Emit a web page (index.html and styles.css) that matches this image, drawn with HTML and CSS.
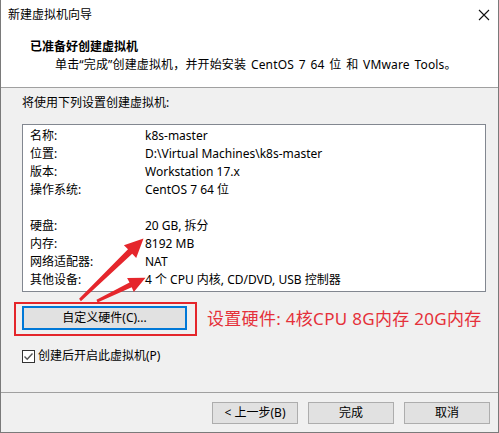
FILE: index.html
```html
<!DOCTYPE html>
<html lang="zh-CN">
<head>
<meta charset="utf-8">
<link rel="stylesheet" href="styles.css">
</head>
<body>
<div class="window">
  <div class="header">
    <div class="titlebar">
      <span class="title">新建虚拟机向导</span>
      <svg class="close" width="12" height="12" viewBox="0 0 12 12"><path d="M1 1 L11 11 M11 1 L1 11" stroke="#111" stroke-width="1.1" fill="none"/></svg>
    </div>
    <div class="head-title">已准备好创建虚拟机</div>
    <div class="head-sub">单击“完成”创建虚拟机，并开始安装 CentOS 7 64 位 和 VMware Tools。</div>
  </div>
  <div class="body">
    <div class="intro">将使用下列设置创建虚拟机:</div>
    <div class="listbox">
      <div class="row"><span class="k">名称:</span><span class="v">k8s-master</span></div>
      <div class="row"><span class="k">位置:</span><span class="v">D:\Virtual Machines\k8s-master</span></div>
      <div class="row"><span class="k">版本:</span><span class="v">Workstation 17.x</span></div>
      <div class="row"><span class="k">操作系统:</span><span class="v">CentOS 7 64 位</span></div>
      <div class="row blank"></div>
      <div class="row"><span class="k">硬盘:</span><span class="v">20 GB, 拆分</span></div>
      <div class="row"><span class="k">内存:</span><span class="v">8192 MB</span></div>
      <div class="row"><span class="k">网络适配器:</span><span class="v">NAT</span></div>
      <div class="row"><span class="k">其他设备:</span><span class="v">4 个 CPU 内核, CD/DVD, USB 控制器</span></div>
    </div>
    <div class="hw-row">
      <div class="redbox"><div class="btn btn-focus">自定义硬件(C)...</div></div>
      <div class="note">设置硬件: 4核CPU 8G内存 20G内存</div>
    </div>
    <div class="check">
      <svg class="cb" width="13" height="13" viewBox="0 0 13 13"><rect x="0.5" y="0.5" width="12" height="12" fill="#fff" stroke="#333"/><path d="M2.5 6.5 L5.2 9.2 L10.5 3.5" stroke="#555" stroke-width="1.4" fill="none"/></svg>
      <span>创建后开启此虚拟机(P)</span>
    </div>
  </div>
  <div class="footer">
    <div class="btn fbtn">&lt; 上一步(B)</div>
    <div class="btn fbtn">完成</div>
    <div class="btn fbtn">取消</div>
  </div>
  <svg class="arrows" width="499" height="433" viewBox="0 0 499 433">
    <polygon fill="#e5262c" points="80.9,301.2 132.2,253.7 136.2,258.0 143.5,238.6 123.9,245.2 128.0,249.3 79.1,298.8"/>
    <polygon fill="#e5262c" points="97.5,302.4 131.7,287.2 133.8,292.0 145.5,277.8 127.1,278.0 129.5,282.6 96.5,299.8"/>
  </svg>
</div>
</body>
</html>
```

FILE: styles.css
```css
* { box-sizing: border-box; }
html, body { margin: 0; padding: 0; }
body {
  font-family: "Noto Sans", "Noto Sans CJK SC", sans-serif;
  font-size: 12px;
  color: #000;
  background: #fff;
}
.window {
  position: relative;
  width: 499px;
  height: 433px;
  border: 1px solid #7a7a7a;
  border-top: none;
  display: flex;
  flex-direction: column;
  background: #f0f0f0;
}
.header {
  background: #fff;
  height: 88px;
  border-bottom: 1px solid #a0a0a0;
}
.titlebar {
  height: 30px;
  display: flex;
  align-items: center;
  justify-content: space-between;
  padding: 0 8px 0 7px;
}
.title { line-height: 30px; }
.close { display: block; }
.head-title {
  margin-top: 8px;
  padding-left: 29px;
  line-height: 18px;
  font-weight: bold;
}
.head-sub {
  padding-left: 54px;
  line-height: 18px;
  word-spacing: 1.5px;
  letter-spacing: 0.15px;
}
.body {
  flex: 1;
  padding: 6px 13px 0 13px;
}
.intro {
  margin-left: 8px;
  line-height: 18px;
}
.listbox {
  margin: 12px 0 0 8px;
  width: 464px;
  height: 168px;
  border: 1px solid #828790;
  background: #fff;
  padding: 2px 0 0 7px;
}
.row {
  display: flex;
  height: 18px;
  line-height: 18px;
}
.k { width: 115px; }
.hw-row {
  margin-top: 10px;
  display: flex;
  align-items: center;
}
.redbox {
  width: 183px;
  height: 34px;
  border: 2px solid #e4262b;
  padding: 2px 0 0 6px;
}
.btn {
  background: #e1e1e1;
  border: 1px solid #adadad;
  text-align: center;
}
.btn-focus {
  width: 165px;
  height: 24px;
  line-height: 20px;
  border: 2px solid #0078d7;
}
.note {
  margin-left: 10px;
  font-size: 17px;
  letter-spacing: 0.3px;
  color: #e5303a;
  line-height: 24px;
}
.check {
  margin: 12px 0 0 8px;
  display: flex;
  align-items: center;
  gap: 3px;
  line-height: 16px;
}
.cb { display: block; }
.footer {
  height: 40px;
  border-top: 1px solid #a0a0a0;
  display: flex;
  justify-content: flex-end;
  gap: 10px;
  padding: 9px 8px 0 0;
}
.fbtn {
  width: 86px;
  height: 22px;
  line-height: 20px;
}
.arrows {
  position: absolute;
  left: -1px;
  top: 0;
  pointer-events: none;
}
```
